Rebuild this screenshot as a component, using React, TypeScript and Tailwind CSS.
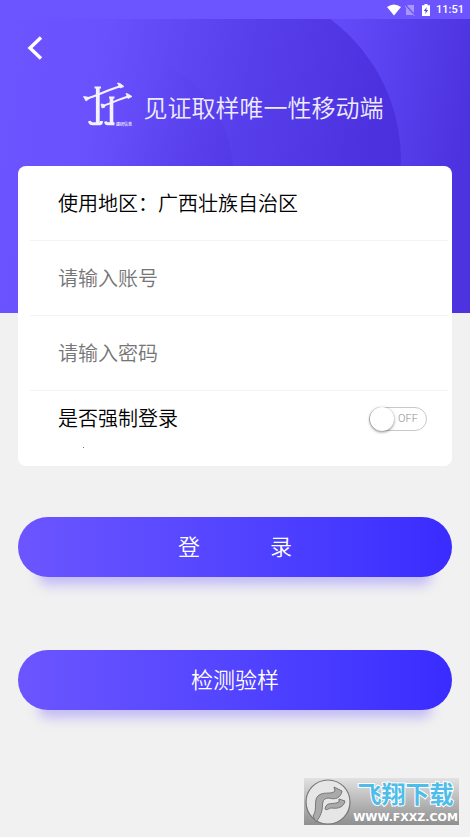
import { useState } from 'react';

const cjk = "font-['Roboto','Noto_Sans_CJK_SC',sans-serif]";

function StatusBar() {
  return (
    <div className="relative flex h-[19px] items-center justify-end bg-[#6c55ff] pr-[6px] text-white">
      <svg className="mr-1 h-3 w-[14px]" viewBox="0 0 14 12" fill="currentColor">
        <path d="M0 3 Q7 -2.2 14 3 L7 11.5 Z" />
      </svg>
      <svg className="mr-[7px] h-3 w-[10px] opacity-40" viewBox="0 0 10 12">
        <path d="M3 1 H9 V11 H1 V3 Z" fill="currentColor" />
        <path d="M0 1 L10 11.5" stroke="#6c55ff" strokeWidth="2" />
        <path d="M0 2 L9.5 12" stroke="currentColor" strokeWidth="1" />
      </svg>
      <svg className="mr-[6px] h-3 w-2" viewBox="0 0 8 12">
        <path d="M2.5 0 H5.5 V1.2 H8 V12 H0 V1.2 H2.5 Z" fill="currentColor" />
        <path d="M4.8 3 L1.8 7 H3.7 L3.2 10 L6.2 6 H4.3 Z" fill="#5a45d8" />
      </svg>
      <span className="text-[11px] leading-[19px] font-medium">11:51</span>
    </div>
  );
}

function HeaderBackdrop() {
  return (
    <svg className="absolute inset-0 h-full w-full" viewBox="0 0 470 294" preserveAspectRatio="none" aria-hidden="true">
      <defs>
        <linearGradient id="base" gradientUnits="userSpaceOnUse" x1="0" y1="0" x2="470" y2="80">
          <stop offset="0" stopColor="#6c55ff" />
          <stop offset="0.7" stopColor="#634bfa" />
          <stop offset="1" stopColor="#4c33df" />
        </linearGradient>
        <linearGradient id="disc" gradientUnits="userSpaceOnUse" x1="100" y1="40" x2="390" y2="100">
          <stop offset="0" stopColor="#4a30dc" stopOpacity="0" />
          <stop offset="0.5" stopColor="#4a30dc" stopOpacity="0.5" />
          <stop offset="1" stopColor="#4a30dc" stopOpacity="0.9" />
        </linearGradient>
        <linearGradient id="inner" gradientUnits="userSpaceOnUse" x1="130" y1="100" x2="235" y2="150">
          <stop offset="0" stopColor="#4a30dc" stopOpacity="0" />
          <stop offset="1" stopColor="#4a30dc" stopOpacity="0.3" />
        </linearGradient>
      </defs>
      <rect width="470" height="294" fill="url(#base)" />
      <circle cx="225" cy="141" r="176" fill="url(#disc)" />
      <circle cx="113" cy="153" r="120" fill="url(#inner)" />
    </svg>
  );
}

function Logo() {
  return (
    <svg className="h-[46px] w-[50px]" viewBox="0 0 50 46" fill="none" stroke="#f4f2ff" role="img" aria-label="logo">
      <path d="M2 17 C14 14 24 8 38 4" strokeWidth="2.2" />
      <path d="M0.5 14.5 L4 15 L7 16 L3 19 Z M34.5 1 L37 1.5 L41 4.5 L37 6 Z" fill="#f4f2ff" strokeWidth="0.8" />
      <path d="M19 24 C28 22 35 17 46 14.5" strokeWidth="2" />
      <path d="M18 22 L21 22.5 L22 25 L19 26 Z M43 11.5 L45 12 L49 14.5 L45 16.5 Z" fill="#f4f2ff" strokeWidth="0.8" />
      <path d="M14.8 6 V41" strokeWidth="3.8" />
      <path d="M11.5 5.5 H18" strokeWidth="2" />
      <path d="M28.5 16 V41" strokeWidth="3.6" />
      <path d="M26 15.5 H31.5" strokeWidth="2" />
      <path d="M6.5 39 Q7 42 10 41.8 H17 Q18.5 41.5 18.5 39 M22.5 39.5 Q23 42 25 41.8 H31.5" strokeWidth="3" />
      <text x="33" y="43.5" fontSize="4" fontWeight="500" fill="#fff" stroke="none" fontFamily="Noto Sans CJK SC, sans-serif">建研信息</text>
    </svg>
  );
}

function ForceSwitch() {
  const [on, setOn] = useState(false);
  return (
    <button
      id="force-login"
      type="button"
      role="switch"
      aria-checked={on}
      onClick={() => setOn(!on)}
      className={`flex h-6 w-[58px] items-center rounded-full border border-[#c8c8c8] bg-white pr-1 text-[11px] text-[#8c8c8c] ${on ? 'flex-row-reverse' : ''}`}
    >
      <span className="h-6 w-6 shrink-0 rounded-full bg-white shadow-[0_1px_3px_rgba(0,0,0,0.5)]" />
      <span className="flex-1 text-center">{on ? 'ON' : 'OFF'}</span>
    </button>
  );
}

function Watermark() {
  return (
    <div className="absolute right-[11px] bottom-3 flex h-[47px] w-[155px] items-center bg-linear-to-b from-[#e2e2e2] to-[#8f8f8f]">
      <svg className="h-[47px] w-[48px] shrink-0" viewBox="0 0 48 47">
        <circle cx="24" cy="24" r="22" fill="#e6e6e6" stroke="#777" strokeWidth="1.2" />
        <path d="M9 38 C14 31 9 23 14 18 C19 13 27 17 31 13 L30 9 L38 13 C37 20 31 22 25 20 C17 20 19 27 18 32 C17 37 14 42 12 44 Z" fill="#aaa" stroke="#777" />
        <path d="M21 31 C22 23 30 27 35 24 L35 21 L41 23 C40 29 34 31 28 30 C24 30 24 33 21 31 Z" fill="#aaa" stroke="#777" />
      </svg>
      <div className="flex flex-1 flex-col items-center">
        <span className="text-2xl leading-[32px] font-bold whitespace-nowrap text-[#4fbdea] [-webkit-text-stroke:2px_#fff] [paint-order:stroke_fill]">
          飞翔下载
        </span>
        <span className="font-['DejaVu_Sans',sans-serif] text-[11px] leading-[14px] font-bold text-white">WWW.FXXZ.COM</span>
      </div>
    </div>
  );
}

const pill =
  'flex h-[60px] w-full items-center justify-center rounded-full bg-linear-to-r from-[#6c55ff] to-[#3a2bff] text-[22px] text-white shadow-[0_28px_12px_-20px_rgba(108,85,255,0.35)]';
const field = 'w-full bg-transparent text-xl text-black outline-none placeholder:text-[#757575]';
const row = 'flex h-[75px] items-center border-b border-[#f3f3f3] pt-[2px] pr-6 pl-7';

export default function App() {
  return (
    <div className={`relative min-h-screen bg-[#f1f1f1] font-[350] ${cjk}`}>
      <StatusBar />
      <header className="relative h-[294px]">
        <HeaderBackdrop />
        <div className="relative">
          <button type="button" aria-label="返回" className="ml-6 flex h-[58px] w-8 items-center">
            <svg className="h-6 w-5" viewBox="0 0 20 24" fill="none" stroke="#fff" strokeWidth="3.4">
              <path d="M17 1.5 L6 12 L17 22.5" />
            </svg>
          </button>
          <div className="flex items-center justify-center gap-[11px] pr-1">
            <Logo />
            <h1 className="pt-2 text-[24px] leading-[48px] text-[#eeebff]">见证取样唯一性移动端</h1>
          </div>
        </div>
      </header>

      <form className="relative -mt-[147px] px-[18px]" onSubmit={e => e.preventDefault()}>
        <div className="h-[300px] rounded-lg bg-white pr-1 pl-3">
          <div className={row}>
            <p className="text-xl text-black">使用地区：广西壮族自治区</p>
          </div>
          <div className={row}>
            <input type="text" aria-label="账号" placeholder="请输入账号" className={field} />
          </div>
          <div className={row}>
            <input type="password" aria-label="密码" placeholder="请输入密码" className={field} />
          </div>
          <div className="flex h-14 items-center justify-between pr-[21px] pl-7">
            <label htmlFor="force-login" className="text-xl text-black">是否强制登录</label>
            <ForceSwitch />
          </div>
          <span className="ml-[53px] block h-px w-px bg-gray-500" />
        </div>

        <button type="submit" className={`${pill} mt-[51px] gap-[70px]`}>
          <span>登</span>
          <span>录</span>
        </button>
        <button type="button" className={`${pill} mt-[73px]`}>检测验样</button>
      </form>
      <Watermark />
    </div>
  );
}
